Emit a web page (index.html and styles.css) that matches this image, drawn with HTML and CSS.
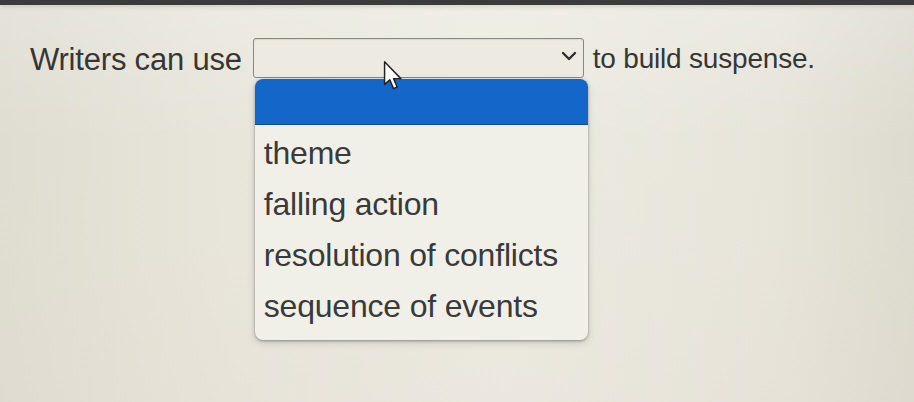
FILE: index.html
```html
<!DOCTYPE html>
<html lang="en">
<head>
<meta charset="utf-8">
<title>Question</title>
<link rel="stylesheet" href="styles.css">
</head>
<body>
  <div class="topbar"></div>
  <main class="page">
    <p class="sentence">
      <span class="words lead">Writers can use</span>
      <span class="picker">
        <span class="select">
          <svg class="chevron" viewBox="0 0 16 10" width="16" height="10"><path d="M2 2 L8 8 L14 2" fill="none" stroke="#2e2e2e" stroke-width="2.4" stroke-linecap="round" stroke-linejoin="round"/></svg>
        </span>
        <span class="menu">
          <span class="menu-head"></span>
          <span class="menu-list">
            <span class="option">theme</span>
            <span class="option">falling action</span>
            <span class="option">resolution of conflicts</span>
            <span class="option">sequence of events</span>
          </span>
        </span>
        <svg class="pointer" viewBox="0 0 20 30" width="21" height="32"><path d="M1.5 1.5 L1.5 23 L6.5 18.5 L10 27 L13.5 25.5 L10 17.5 L17 17.5 Z" fill="#fff" stroke="#222" stroke-width="1.4" stroke-linejoin="round"/></svg>
      </span>
      <span class="words tail">to build suspense.</span>
    </p>
  </main>
</body>
</html>
```

FILE: styles.css
```css
html, body {
  margin: 0;
  height: 100%;
}

body {
  font-family: "Liberation Sans", Arial, sans-serif;
  color: #363636;
  background: linear-gradient(90deg, #dfddd1 0%, #e8e6db 25%, #ecebe1 55%, #e7e5da 85%, #dddbcf 100%);
  overflow: hidden;
}

.topbar {
  height: 5px;
  background: #3b3b3b;
  box-shadow: 0 2px 4px rgba(0, 0, 0, 0.15);
}

.page {
  height: 397px;
  background: linear-gradient(180deg, rgba(255, 255, 255, 0.18) 0%, rgba(255, 255, 255, 0) 35%, rgba(230, 210, 205, 0.15) 100%);
}

.sentence {
  margin: 0;
  padding: 30px 0 0 30px;
  display: flex;
  align-items: center;
  letter-spacing: -0.2px;
}

.words {
  line-height: 40px;
  padding-top: 5px;
}

.lead {
  font-size: 31px;
  margin-right: 11px;
}

.tail {
  font-size: 28px;
  margin-left: 9px;
  padding-top: 2px;
}

.picker {
  position: relative;
  display: block;
  width: 331px;
  height: 40px;
}

.select {
  display: flex;
  align-items: center;
  justify-content: flex-end;
  box-sizing: border-box;
  height: 100%;
  padding-right: 6px;
  border: 1.5px solid #8a8882;
  border-radius: 3px;
  background: #eceae1;
  box-shadow: inset 0 1px 1px rgba(0, 0, 0, 0.08);
}

.chevron {
  margin-top: -3px;
}

.menu {
  position: absolute;
  left: 2px;
  top: 41px;
  width: 333px;
  display: flex;
  flex-direction: column;
  border-radius: 8px;
  overflow: hidden;
  background: #f1f0e8;
  box-shadow: 0 1px 3px rgba(0, 0, 0, 0.35), 0 3px 8px rgba(0, 0, 0, 0.12);
  z-index: 1;
}

.menu-head {
  display: block;
  height: 45px;
  background: #1267c9;
  border-bottom: 1px solid #0e4f98;
}

.menu-list {
  display: flex;
  flex-direction: column;
  padding: 3px 0 8px 9px;
}

.option {
  display: block;
  height: 51px;
  line-height: 51px;
  font-size: 32px;
  letter-spacing: -0.2px;
  color: #3a3a3a;
}

.pointer {
  position: absolute;
  left: 130px;
  top: 22px;
  z-index: 2;
}
```
